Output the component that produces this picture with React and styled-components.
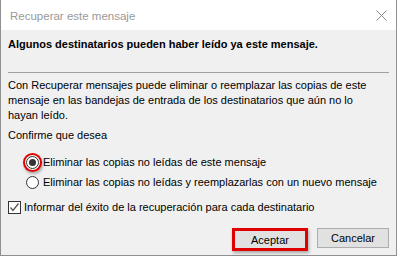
import styled, { createGlobalStyle } from 'styled-components'

const GlobalStyle = createGlobalStyle`
    html, body {
        margin: 0;
        padding: 0;
        background: #ffffff;
    }
    * {
        box-sizing: border-box;
    }
`;

const Window = styled.div`
    width: 397px;
    height: 256px;
    display: flex;
    flex-direction: column;
    border: 1px solid #8f8f8f;
    border-top: none;
    font-family: 'Liberation Sans', Arial, sans-serif;
    font-size: 11px;
    color: #000;
    overflow: hidden;
`;

const TitleBar = styled.div`
    height: 30px;
    flex-shrink: 0;
    display: flex;
    align-items: center;
    justify-content: space-between;
    padding: 0 9px 0 9px;
    background: #ffffff;
`;

const Title = styled.span`
    color: #999999;
    font-size: 11.5px;
    padding-top: 1px;
`;

const CloseButton = styled.button`
    width: 12px;
    height: 12px;
    padding: 0;
    border: none;
    background: none;
    display: flex;
    align-items: center;
    justify-content: center;
`;

const Body = styled.div`
    flex: 1;
    display: flex;
    flex-direction: column;
    padding: 0 7px 0 7px;
    background: #f0f0f0;
    white-space: nowrap;
`;

const Heading = styled.p`
    margin: 7px 0 0 0;
    font-weight: bold;
    line-height: 15px;
`;

const Divider = styled.hr`
    width: 100%;
    height: 0;
    margin: 20px 0 0 0;
    border: 0;
    border-top: 1px solid #a0a0a0;
`;

const Text = styled.p`
    margin: ${props => props.top}px 0 0 0;
    line-height: 15px;
`;

const Options = styled.div`
    display: flex;
    flex-direction: column;
    gap: 4px;
    margin: 11px 0 0 18px;
`;

const OptionRow = styled.label`
    height: 16px;
    display: flex;
    align-items: center;
    gap: 4px;
`;

const Radio = styled.span`
    width: 13px;
    height: 13px;
    flex-shrink: 0;
    border-radius: 50%;
    border: 1px solid #333333;
    background: #ffffff;
    display: flex;
    align-items: center;
    justify-content: center;

    &::after {
        content: '';
        width: 7px;
        height: 7px;
        border-radius: 50%;
        background: #333333;
        display: ${props => props.checked ? 'block' : 'none'};
    }

    ${props => props.marked && `
        box-shadow: 0 0 0 1px #ffffff, 0 0 0 3px #e00000, 1px 2px 3px 3px rgba(0, 0, 0, 0.3);
    `}
`;

const CheckRow = styled.label`
    height: 16px;
    display: flex;
    align-items: center;
    gap: 3px;
    margin: 9px 0 0 0;
`;

const Checkbox = styled.span`
    width: 13px;
    height: 13px;
    flex-shrink: 0;
    border: 1px solid #333333;
    background: #ffffff;
    display: flex;
    align-items: center;
    justify-content: center;
`;

const Footer = styled.div`
    display: flex;
    justify-content: flex-end;
    align-items: flex-start;
    gap: 9px;
    margin-top: 13px;
`;

const Button = styled.button`
    width: ${props => props.marked ? 76 : 72}px;
    height: ${props => props.marked ? 23 : 20}px;
    padding: 0;
    font-family: 'Liberation Sans', Arial, sans-serif;
    font-size: 11px;
    color: #000;
    background: #e1e1e1;
    border: ${props => props.marked ? '3px solid #e00000' : '1px solid #adadad'};
    box-shadow: ${props => props.marked ? '1px 2px 3px rgba(0, 0, 0, 0.3)' : 'none'};
`;

export default function App() {
    return (
        <>
            <GlobalStyle />
            <Window>
                <TitleBar>
                    <Title>Recuperar este mensaje</Title>
                    <CloseButton aria-label='Cerrar'>
                        <svg width='11' height='11' viewBox='0 0 11 11'>
                            <path d='M0.5 0.5 L10.5 10.5 M10.5 0.5 L0.5 10.5' stroke='#8a8a8a' strokeWidth='1' fill='none' />
                        </svg>
                    </CloseButton>
                </TitleBar>
                <Body>
                    <Heading>Algunos destinatarios pueden haber leído ya este mensaje.</Heading>
                    <Divider />
                    <Text top={5}>
                        Con Recuperar mensajes puede eliminar o reemplazar las copias de este<br />
                        mensaje en las bandejas de entrada de los destinatarios que aún no lo<br />
                        hayan leído.
                    </Text>
                    <Text top={5}>Confirme que desea</Text>
                    <Options>
                        <OptionRow>
                            <Radio checked marked />
                            Eliminar las copias no leídas de este mensaje
                        </OptionRow>
                        <OptionRow>
                            <Radio />
                            Eliminar las copias no leídas y reemplazarlas con un nuevo mensaje
                        </OptionRow>
                    </Options>
                    <CheckRow>
                        <Checkbox>
                            <svg width='11' height='11' viewBox='0 0 11 11'>
                                <path d='M1.5 5.5 L4 8.5 L9.5 1.5' stroke='#555555' strokeWidth='1.3' fill='none' />
                            </svg>
                        </Checkbox>
                        Informar del éxito de la recuperación para cada destinatario
                    </CheckRow>
                    <Footer>
                        <Button marked>Aceptar</Button>
                        <Button>Cancelar</Button>
                    </Footer>
                </Body>
            </Window>
        </>
    )
}
